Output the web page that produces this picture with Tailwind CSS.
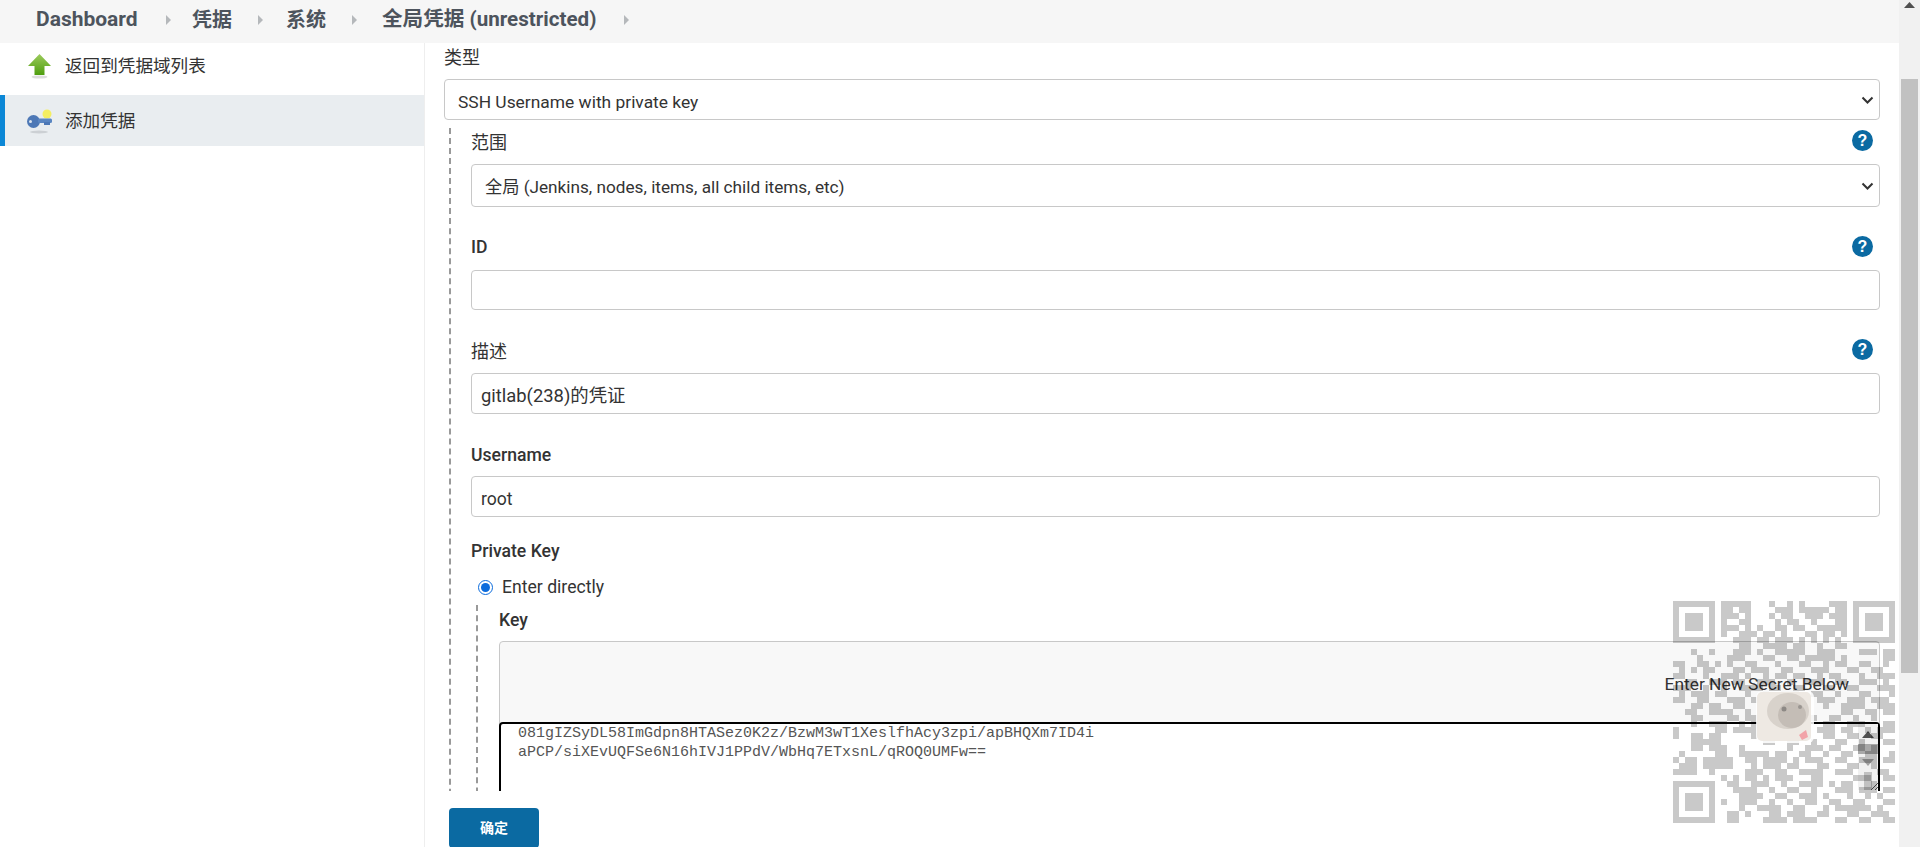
<!DOCTYPE html>
<html lang="zh-CN">
<head>
<meta charset="utf-8">
<title>添加凭据</title>
<script src="https://cdn.jsdelivr.net/npm/@tailwindcss/browser@4"></script>
</head>
<body class="m-0 h-[847px] overflow-hidden bg-white font-['Roboto','Noto_Sans_CJK_SC',sans-serif] text-[17.6px] text-[#333]">
<div class="relative flex h-[847px] w-[1920px] overflow-hidden">
  <div class="flex h-full w-[1899px] flex-col">
    <header class="flex h-[43px] shrink-0 items-center bg-[#f6f6f6] pb-[4px] pl-[36px] text-[20px] font-bold text-[#4d545d]">
      <span class="w-[102px] text-[21px]">Dashboard</span>
      <svg class="ml-[27px] mr-[20px]" width="7" height="12" viewBox="0 0 7 12"><path d="M1 1l5 5-5 5z" fill="#b5b8bb"/></svg>
      <span class="w-[40px]">凭据</span>
      <svg class="ml-[25px] mr-[22px]" width="7" height="12" viewBox="0 0 7 12"><path d="M1 1l5 5-5 5z" fill="#b5b8bb"/></svg>
      <span class="w-[40px]">系统</span>
      <svg class="ml-[25px] mr-[24px]" width="7" height="12" viewBox="0 0 7 12"><path d="M1 1l5 5-5 5z" fill="#b5b8bb"/></svg>
      <span class="w-[213px] whitespace-nowrap text-[20.6px]">全局凭据 (unrestricted)</span>
      <svg class="ml-[28px]" width="7" height="12" viewBox="0 0 7 12"><path d="M1 1l5 5-5 5z" fill="#b5b8bb"/></svg>
    </header>
    <div class="flex min-h-0 flex-1">
      <aside class="w-[425px] shrink-0 border-r border-[#eeeeee]">
        <a class="mb-[6px] flex h-[46px] items-center pl-[27px] gap-[13px]">
          <svg width="25" height="26" viewBox="0 0 25 26">
            <defs><linearGradient id="g" x1="0" y1="0" x2="0" y2="1"><stop offset="0" stop-color="#9ccb5c"/><stop offset="1" stop-color="#4f9e0f"/></linearGradient></defs>
            <ellipse cx="12.5" cy="24" rx="8" ry="1.6" fill="#ddd"/>
            <path d="M12.5 1L24 13h-6.5v9h-10v-9H1z" fill="url(#g)"/>
          </svg>
          <span>返回到凭据域列表</span>
        </a>
        <a class="flex h-[51px] items-center gap-[12px] border-l-[5px] border-[#0b87d6] bg-[#e9edf0] pl-[21px]">
          <svg width="27" height="26" viewBox="0 0 27 26">
            <ellipse cx="13" cy="24" rx="9" ry="1.5" fill="#ccd0d4"/>
            <circle cx="21" cy="6" r="4.5" fill="#f4ee62"/>
            <circle cx="7.5" cy="13.5" r="6.5" fill="#4d78b6"/>
            <rect x="12" y="10.5" width="14" height="4.5" rx="1.5" fill="#5a86c2"/>
            <rect x="18" y="14" width="6" height="3" fill="#4d78b6"/>
            <circle cx="4.5" cy="13.5" r="1.5" fill="#dbe4ef"/>
          </svg>
          <span class="pt-[2px]">添加凭据</span>
        </a>
      </aside>
      <main class="flex min-w-0 flex-1 flex-col">
        <div class="min-h-0 flex-1 overflow-hidden pl-[19px] pr-[19px]">
          <div class="flex h-[28px] items-center text-[18px]">类型</div>
          <div class="relative mt-[8px]">
            <select class="h-[41px] w-full appearance-none rounded-[4px] border border-[#c8c8c8] bg-white pl-[13px] pt-[6px] text-[17.4px]"><option>SSH Username with private key</option></select>
            <svg class="absolute right-[6px] top-[17px]" width="13" height="9" viewBox="0 0 13 9"><path d="M1.5 1.5l5 5 5-5" fill="none" stroke="#333" stroke-width="2"/></svg>
          </div>
          <div class="ml-[5px] mt-[8px] border-l-2 border-dashed border-[#999] pl-[20px]">
            <div class="flex h-[28px] items-center justify-between">
              <span class="text-[18px]">范围</span>
              <svg width="21" height="21" viewBox="0 0 21 21" class="-mt-[4px] mr-[7px]"><circle cx="10.5" cy="10.5" r="10.5" fill="#0b6aa2"/><text x="10.5" y="16" text-anchor="middle" fill="#fff" font-size="16" font-weight="700" font-family="Liberation Sans">?</text></svg>
            </div>
            <div class="relative mt-[8px]">
              <select class="h-[43px] w-full appearance-none rounded-[4px] border border-[#c8c8c8] bg-white pl-[13px] pt-[5px] text-[17.2px]"><option>全局 (Jenkins, nodes, items, all child items, etc)</option></select>
              <svg class="absolute right-[6px] top-[18px]" width="13" height="9" viewBox="0 0 13 9"><path d="M1.5 1.5l5 5 5-5" fill="none" stroke="#333" stroke-width="2"/></svg>
            </div>
            <div class="mt-[26px] flex h-[28px] items-center justify-between">
              <span class="font-medium">ID</span>
              <svg width="21" height="21" viewBox="0 0 21 21" class="-mt-[2px] mr-[7px]"><circle cx="10.5" cy="10.5" r="10.5" fill="#0b6aa2"/><text x="10.5" y="16" text-anchor="middle" fill="#fff" font-size="16" font-weight="700" font-family="Liberation Sans">?</text></svg>
            </div>
            <input class="mt-[9px] block h-[40px] w-full rounded-[4px] border border-[#c8c8c8] bg-white pl-[9px]" value="">
            <div class="mt-[27px] flex h-[28px] items-center justify-between">
              <span class="text-[18px]">描述</span>
              <svg width="21" height="21" viewBox="0 0 21 21" class="-mt-[3px] mr-[7px]"><circle cx="10.5" cy="10.5" r="10.5" fill="#0b6aa2"/><text x="10.5" y="16" text-anchor="middle" fill="#fff" font-size="16" font-weight="700" font-family="Liberation Sans">?</text></svg>
            </div>
            <input class="mt-[8px] block h-[41px] w-full rounded-[4px] border border-[#c8c8c8] bg-white pl-[9px] text-[18.4px]" value="gitlab(238)的凭证">
            <div class="mt-[26px] flex h-[28px] items-center pt-[2px] font-medium">Username</div>
            <input class="mt-[8px] block h-[41px] w-full rounded-[4px] border border-[#c8c8c8] bg-white pl-[9px] pt-[4px]" value="root">
            <div class="mt-[20px] flex h-[28px] items-center font-medium">Private Key</div>
            <label class="mt-[7px] flex h-[28px] items-center pl-[7px] pt-[2px]">
              <input type="radio" checked class="h-[15px] w-[15px] accent-[#0b6bdc]">
              <span class="ml-[9px]">Enter directly</span>
            </label>
            <div class="ml-[5px] mt-[5px] h-[300px] border-l-2 border-dashed border-[#999] pl-[21px]">
              <div class="flex h-[30px] items-center font-medium">Key</div>
              <div class="relative mt-[6px] h-[300px] rounded-[4px] border border-[#c8c8c8] bg-[#f8f8f8]">
                <div class="flex h-[80px] items-center justify-end pr-[30px] pt-[4px] text-[17.4px]">Enter New Secret Below</div>
                <div class="absolute -inset-px top-[80px] rounded-[4px] border-2 border-black bg-white pl-[17px] font-['Liberation_Mono',monospace] text-[15px] leading-[19px] text-[#555]">
                  <div>081gIZSyDL58ImGdpn8HTASez0K2z/BzwM3wT1XeslfhAcy3zpi/apBHQXm7ID4i</div>
                  <div>aPCP/siXEvUQFSe6N16hIVJ1PPdV/WbHq7ETxsnL/qROQ0UMFw==</div>
                  <div class="absolute right-0 top-0 h-[66px] w-[20px] bg-[#f1f1f1]">
                    <svg class="absolute left-[4px] top-[7px]" width="12" height="7" viewBox="0 0 12 7"><path d="M6 0l6 7H0z" fill="#505050"/></svg>
                    <div class="absolute left-0 top-[20px] h-[10px] w-[20px] bg-[#a8a8a8]"></div>
                    <svg class="absolute left-[4px] top-[35px]" width="12" height="7" viewBox="0 0 12 7"><path d="M0 0h12L6 7z" fill="#a3a3a3"/></svg>
                    <div class="absolute bottom-0 left-[6px] h-[18px] w-[8px] bg-[#c1c1c1]"></div>
                    <svg class="absolute bottom-0 right-0" width="8" height="8" viewBox="0 0 8 8"><path d="M1 8l7-7M5 8l3-3" stroke="#555" stroke-width="1"/></svg>
                  </div>
                </div>
              </div>
            </div>
          </div>
        </div>
        <div class="h-[56px] shrink-0 bg-white pl-[24px] pt-[17px]">
          <button class="h-[40px] w-[90px] rounded-[4px] bg-[#0b6aa2] text-[14px] font-bold text-white">确定</button>
        </div>
      </main>
    </div>
  </div>
  <div class="relative h-full w-[21px] shrink-0 bg-[#f1f1f1]">
    <svg class="absolute left-[5px] top-[2px]" width="11" height="6" viewBox="0 0 11 6"><path d="M5.500 0l5.500 6H0z" fill="#505050"/></svg>
    <div class="absolute left-[2px] top-[79px] h-[594px] w-[17px] bg-[#c1c1c1]"></div>
  </div>
  <svg class="pointer-events-none absolute left-[1673px] top-[601px]" width="222" height="222" viewBox="0 0 37 37" shape-rendering="crispEdges">
    <g stroke="#000" stroke-opacity=".21" stroke-width="1" fill="none">
      <path d="M0 .5h7M30 .5h7M0 30.500h7M0 6.500h7M30 6.500h7M0 36.500h7M.5 1v5M6.500 1v5M30.500 1v5M36.500 1v5M.5 31v5M6.500 31v5"/>
      <path d="M2 2.500h3M2 3.500h3M2 4.500h3M32 2.500h3M32 3.500h3M32 4.500h3M2 32.500h3M2 33.500h3M2 34.500h3"/>
      <path d="M8 .5h5M16 .5h1M19 .5h1M21 .5h1M26 .5h3
               M8 1.500h2M11 1.500h2M17 1.500h3M21 1.500h5M27 1.500h2
               M8 2.500h3M12 2.500h1M16 2.500h1M18 2.500h2M22 2.500h3M26 2.500h3
               M8 3.500h1M11 3.500h2M17 3.500h1M19 3.500h2M23 3.500h1M27 3.500h2
               M8 4.500h3M12 4.500h1M14 4.500h1M17 4.500h2M20 4.500h2M24 4.500h5
               M8 5.500h1M11 5.500h3M15 5.500h2M18 5.500h1M22 5.500h2M25 5.500h2M28 5.500h1
               M10 6.500h3M14 6.500h2M17 6.500h3M21 6.500h1M23 6.500h1M25 6.500h1M27 6.500h1
               M11 7.500h2M15 7.500h4M20 7.500h2M24 7.500h1M27 7.500h2
               M3 8.500h1M6 8.500h1M10 8.500h3M14 8.500h1M17 8.500h3M20 8.500h2M24 8.500h3M31 8.500h3M35 8.500h2
               M4 9.500h1M9 9.500h3M15 9.500h2M19 9.500h2M22 9.500h5M28 9.500h1M35 9.500h2
               M0 10.500h2M4 10.500h2M7 10.500h1M9 10.500h1M12 10.500h2M17 10.500h1M21 10.500h2M25 10.500h1M27 10.500h2M31 10.500h2M35 10.500h1
               M1 11.500h1M3 11.500h1M5 11.500h2M10 11.500h2M13 11.500h3M18 11.500h2M23 11.500h3M29 11.500h2M33 11.500h2
               M0 12.500h2M5 12.500h1M8 12.500h3M12 12.500h1M15 12.500h1M17 12.500h2M20 12.500h2M24 12.500h1M26 12.500h2M31 12.500h1M34 12.500h3
               M2 13.500h2M6 13.500h3M10 13.500h2M14 13.500h3M19 13.500h1M22 13.500h3M27 13.500h2M31 13.500h3M35 13.500h1
               M0 14.500h3M5 14.500h1M8 14.500h1M11 14.500h4M16 14.500h2M20 14.500h2M25 14.500h2M29 14.500h2M34 14.500h3
               M1 15.500h1M3 15.500h3M7 15.500h2M12 15.500h1M15 15.500h1M18 15.500h3M23 15.500h2M27 15.500h1M31 15.500h2M36 15.500h1
               M0 16.500h2M4 16.500h2M9 16.500h3M13 16.500h1M16 16.500h2M20 16.500h1M24 16.500h3M29 16.500h3M33 16.500h3
               M3 17.500h2M6 17.500h2M10 17.500h2M14 17.500h2M21 17.500h2M25 17.500h1M28 17.500h4M34 17.500h3
               M2 18.500h2M6 18.500h4M12 18.500h1M15 18.500h2M28 18.500h2M32 18.500h2M35 18.500h2
               M3 19.500h2M9 19.500h2M12 19.500h2M16 19.500h2M21 19.500h3M26 19.500h2M30 19.500h1M33 19.500h1
               M3 20.500h1M6 20.500h3M11 20.500h1M13 20.500h1M15 20.500h3M25 20.500h2M29 20.500h3M35 20.500h2
               M0 21.500h1M7 21.500h2M10 21.500h4M16 21.500h2M24 21.500h3M28 21.500h2M32 21.500h1M34 21.500h3
               M0 22.500h1M3 22.500h2M6 22.500h2M13 22.500h1M18 22.500h1M21 22.500h2M25 22.500h2M29 22.500h2M33 22.500h2
               M3 23.500h5M15 23.500h2M19 23.500h2M23 23.500h1M27 23.500h2M31 23.500h1M35 23.500h2
               M3 24.500h2M6 24.500h3M11 24.500h1M19 24.500h1M22 24.500h3M26 24.500h2M30 24.500h2M33 24.500h1
               M1 25.500h1M7 25.500h2M11 25.500h5M17 25.500h2M21 25.500h2M25 25.500h1M28 25.500h2M32 25.500h2M36 25.500h1
               M0 26.500h1M2 26.500h2M5 26.500h5M12 26.500h2M15 26.500h4M20 26.500h1M22 26.500h3M27 26.500h2M31 26.500h3M35 26.500h2
               M1 27.500h3M5 27.500h5M13 27.500h1M15 27.500h3M19 27.500h2M24 27.500h2M29 27.500h2M33 27.500h1
               M0 28.500h4M6 28.500h1M12 28.500h2M14 28.500h1M17 28.500h2M21 28.500h4M27 28.500h3M34 28.500h2
               M8 29.500h1M10 29.500h1M12 29.500h2M15 29.500h1M17 29.500h3M23 29.500h2M30 29.500h3M35 29.500h2
               M9 30.500h2M13 30.500h3M18 30.500h1M21 30.500h4M26 30.500h1M28 30.500h2M33 30.500h1
               M10 31.500h1M11 31.500h3M16 31.500h1M19 31.500h2M23 31.500h1M27 31.500h3M31 31.500h3M35 31.500h2
               M11 32.500h4M17 32.500h2M21 32.500h3M25 32.500h1M29 32.500h1M32 32.500h1M34 32.500h1
               M8 33.500h1M11 33.500h3M16 33.500h1M19 33.500h1M22 33.500h2M26 33.500h2M30 33.500h2M35 33.500h2
               M11 34.500h1M14 34.500h4M20 34.500h2M25 34.500h1M27 34.500h6M34 34.500h1
               M9 35.500h2M12 35.500h1M16 35.500h2M19 35.500h3M24 35.500h2M29 35.500h2M33 35.500h3
               M9 36.500h2M15 36.500h2M17 36.500h2M20 36.500h4M27 36.500h2M31 36.500h2M35 36.500h2"/>
    </g>
  </svg>
  <svg class="pointer-events-none absolute left-[1756px] top-[691px]" width="58" height="52" viewBox="0 0 58 52">
    <rect x="0" y="0" width="58" height="52" rx="6" fill="#fff" fill-opacity=".85"/>
    <rect x="1" y="1" width="54" height="49" rx="5" fill="#eee9e3"/>
    <ellipse cx="32" cy="20" rx="21" ry="18" fill="#d8d2cb"/>
    <ellipse cx="36" cy="24" rx="14" ry="13" fill="#c4bdb6"/>
    <circle cx="28" cy="18" r="2.500" fill="#8d8985"/>
    <circle cx="44" cy="16" r="2" fill="#9a9591"/>
    <path d="M43 44l7-5 2 7-6 3z" fill="#f2a3a8"/>
  </svg>
</div>
</body>
</html>
